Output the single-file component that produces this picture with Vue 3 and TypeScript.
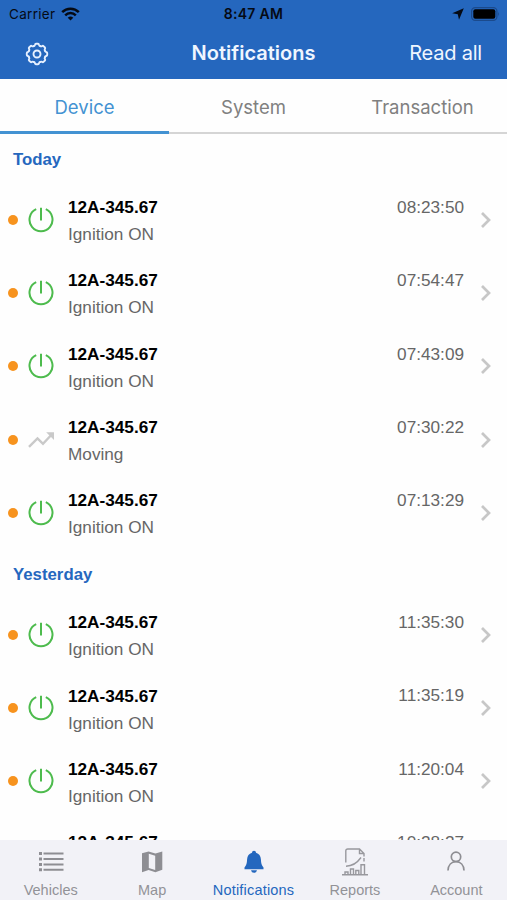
<script setup lang="ts">
type Kind = 'ignition' | 'moving'

interface Notice {
  plate: string
  label: string
  time: string
  kind: Kind
}

interface Section {
  title: string
  items: Notice[]
}

const ignition = (time: string): Notice => ({ plate: '12A-345.67', label: 'Ignition ON', time, kind: 'ignition' })
const moving = (time: string): Notice => ({ plate: '12A-345.67', label: 'Moving', time, kind: 'moving' })

const tabs = [
  { name: 'Device', active: true },
  { name: 'System', active: false },
  { name: 'Transaction', active: false },
]

const sections: Section[] = [
  {
    title: 'Today',
    items: [ignition('08:23:50'), ignition('07:54:47'), ignition('07:43:09'), moving('07:30:22'), ignition('07:13:29')],
  },
  {
    title: 'Yesterday',
    items: [ignition('11:35:30'), ignition('11:35:19'), ignition('11:20:04'), ignition('10:28:27')],
  },
]

const nav = ['Vehicles', 'Map', 'Notifications', 'Reports', 'Account']
const cogTurns = [0, 45, 90, 135, 180, 225, 270, 315]
</script>

<template>
  <div class="screen">
    <header class="top">
      <div class="status">
        <div class="carrier">
          <span>Carrier</span>
          <svg width="19" height="14" viewBox="0 0 19 14">
            <path d="M9.500 13.600L6.700 10.800A4 4 0 0 1 12.300 10.800Z" fill="#050a14" />
            <path d="M4.200 8.300A7.500 7.500 0 0 1 14.800 8.300M1.200 5.200A11.700 11.700 0 0 1 17.800 5.200" fill="none" stroke="#050a14" stroke-width="2.500" />
          </svg>
        </div>
        <span class="clock">8:47 AM</span>
        <div class="power">
          <svg width="12" height="12" viewBox="0 0 12 12"><path d="M11.800 .2L7 11.800L5.800 6.200L.2 5.300Z" fill="#050a14" /></svg>
          <svg width="29" height="14" viewBox="0 0 29 14">
            <rect x=".6" y=".6" width="25.300" height="12.800" rx="3.600" fill="none" stroke="#1b4a8c" stroke-width="1.200" />
            <rect x="2.300" y="2.300" width="22" height="9.400" rx="2" fill="#000" />
            <path d="M27.200 4.800Q29 7 27.200 9.200Z" fill="#1b4a8c" />
          </svg>
        </div>
      </div>
      <div class="bar">
        <svg class="gear" width="24" height="24" viewBox="-12 -12 24 24" fill="none" stroke="#e6f0ff" stroke-width="1.900" stroke-linejoin="round" stroke-linecap="round">
          <path
            v-for="turn in cogTurns"
            :key="turn"
            :transform="`rotate(${turn})`"
            d="M-3.300 -7.900Q-2.300 -8 -2 -9.200Q-1.800 -10.200 -1 -10.200H1Q1.800 -10.200 2 -9.200Q2.300 -8 3.300 -7.900"
          />
          <circle r="3.500" />
        </svg>
        <h1>Notifications</h1>
        <span class="read">Read all</span>
      </div>
    </header>

    <nav class="tabs">
      <div v-for="tab in tabs" :key="tab.name" class="tab" :class="{ active: tab.active }">
        <span>{{ tab.name }}</span>
      </div>
    </nav>

    <main class="list">
      <section v-for="section in sections" :key="section.title">
        <h2>{{ section.title }}</h2>
        <article v-for="item in section.items" :key="item.time" class="row">
          <i class="dot"></i>
          <svg v-if="item.kind === 'ignition'" class="kind" width="26" height="26" viewBox="0 0 26 26" fill="none" stroke="#4dbb4d" stroke-width="2">
            <path d="M8.200 2.200A11.500 11.500 0 1 0 17.800 2.200M13 .8V13.500" />
          </svg>
          <svg v-else class="kind" width="26" height="26" viewBox="0 0 26 26" fill="none" stroke="#c9c9c9" stroke-width="2.400">
            <path d="M1 19.800L9.500 11.400L15 16.800L23 8.200" />
            <path d="M18.200 5.300H26V13.100Z" fill="#c9c9c9" stroke="none" />
          </svg>
          <div class="text">
            <strong>{{ item.plate }}</strong>
            <span>{{ item.label }}</span>
          </div>
          <time>{{ item.time }}</time>
          <svg class="chevron" width="12" height="18" viewBox="0 0 12 18" fill="none" stroke="#c7c7c7" stroke-width="2.700">
            <path d="M2 2L9 9L2 16" />
          </svg>
        </article>
      </section>
    </main>

    <footer class="bottom">
      <div v-for="name in nav" :key="name" class="item" :class="{ current: name === 'Notifications' }">
        <svg v-if="name === 'Vehicles'" width="28" height="28" viewBox="0 0 28 28" fill="#8e8e93">
          <path d="M2 4h3v3H2zM2 9.600h3v3H2zM2 15h3v3H2zM2 20.300h3v3H2zM6.500 4.600h20v2h-20zM6.500 10h20v2h-20zM6.500 15.400h20v2h-20zM6.500 20.800h20v2h-20z" />
        </svg>
        <svg v-else-if="name === 'Map'" width="28" height="28" viewBox="0 0 28 28">
          <path fill="#8e8e93" fill-rule="evenodd" d="M4 5.300L10.600 3.400L17.400 5.500L24.300 3.400V21.800L17.400 24.300L10.600 22L4 24.300ZM10.800 5.800V20L17.200 22.100V7.800Z" />
        </svg>
        <svg v-else-if="name === 'Notifications'" width="28" height="28" viewBox="0 0 28 28" fill="#2467be">
          <path d="M14 2.700C15.200 2.700 16 3.500 16 4.700C19 5.500 20.700 8 20.900 11.300C21.100 15.400 21.500 17.400 23.500 19.400V21.200H4.500V19.400C6.500 17.400 6.900 15.400 7.100 11.300C7.300 8 9 5.500 12 4.700C12 3.500 12.800 2.700 14 2.700ZM11 22.200H17Q16.500 24.800 14 24.800T11 22.200Z" />
        </svg>
        <svg v-else-if="name === 'Reports'" width="28" height="28" viewBox="0 0 28 28" fill="none" stroke="#98989d" stroke-width="1.400">
          <path d="M4.800 14.500V3Q4.800 1 6.800 1H18.500L23 5.500V8.500M18.500 1V5.500H23M23 10V13.500M5 18.200Q14 18 20 9.500M1 26.800H27M4 26.500V24H7V26.500M9.500 26.500V21H12.500V26.500M14.800 26.500V22.500H17.800V26.500M20 26.500V16.800H23.500V26.500" />
        </svg>
        <svg v-else width="28" height="28" viewBox="0 0 28 28" fill="none" stroke="#8e8e93" stroke-width="1.700">
          <circle cx="14" cy="8.800" r="4.700" />
          <path d="M6 22.500C6.200 17 9.500 13.700 14 13.700S21.800 17 22 22.500" />
        </svg>
        <span>{{ name }}</span>
      </div>
    </footer>
  </div>
</template>

<style>
body {
  margin: 0;
  overflow: hidden;
}
</style>

<style scoped>
.screen {
  display: flex;
  flex-direction: column;
  width: 507px;
  height: 900px;
  overflow: hidden;
  background: #fefefe;
  font-family: "Liberation Sans", Arial, sans-serif;
}
.top {
  flex: none;
  height: 79px;
  background: #2567be;
  font-family: Inter, sans-serif;
}
.status {
  display: grid;
  grid-template-columns: 1fr auto 1fr;
  align-items: center;
  height: 27px;
  color: #050a14;
  font-size: 13px;
}
.carrier {
  display: flex;
  align-items: center;
  gap: 6px;
  padding-left: 9px;
  font-size: 13.500px;
  letter-spacing: 0.3px;
}
.clock {
  font-size: 14px;
  font-weight: 600;
  letter-spacing: 0.3px;
}
.power {
  display: flex;
  justify-content: flex-end;
  align-items: center;
  gap: 7px;
  padding-right: 7px;
}
.bar {
  display: grid;
  grid-template-columns: 1fr auto 1fr;
  align-items: center;
  height: 52px;
  color: #eff6ff;
}
.gear {
  margin: 2px 0 0 24.500px;
}
h1 {
  margin: 0;
  font-size: 20px;
  font-weight: 600;
}
.read {
  padding-right: 25px;
  text-align: right;
  font-size: 20px;
  letter-spacing: -0.200px;
}
.tabs {
  display: flex;
  flex: none;
  height: 55.300px;
  font-family: Inter, sans-serif;
  font-size: 18.500px;
}
.tab {
  flex: 1;
  box-sizing: border-box;
  padding-top: 17px;
  border-bottom: 2px solid #d5d5d5;
  color: #808080;
  line-height: 22px;
  text-align: center;
}
.tab.active {
  border-bottom: 3px solid #4392d2;
  color: #4392d2;
}
.list {
  flex: 1;
  min-height: 0;
  overflow: hidden;
}
h2 {
  margin: 0;
  padding-left: 13px;
  height: 48.700px;
  color: #2567be;
  font-size: 16.800px;
  font-weight: 700;
  line-height: 52px;
}
.row {
  display: flex;
  align-items: center;
  box-sizing: border-box;
  height: 73.300px;
  padding: 0 15px 0 8px;
}
.dot {
  flex: none;
  width: 10px;
  height: 10px;
  border-radius: 50%;
  background: #f7931e;
}
.kind {
  flex: none;
  margin: 0 14px 0 10px;
}
.text {
  display: flex;
  flex: 1;
  flex-direction: column;
  gap: 7px;
  padding-top: 2px;
  line-height: 20px;
}
.text strong {
  color: #000;
  font-size: 17.200px;
}
.text span {
  color: #666;
  font-size: 17.200px;
}
time {
  align-self: flex-start;
  padding-top: 14px;
  color: #666;
  font-size: 17.200px;
  line-height: 20px;
}
.chevron {
  flex: none;
  margin-left: 16px;
}
.bottom {
  display: flex;
  flex: none;
  height: 60px;
  background: #f2f2f7;
}
.item {
  display: flex;
  flex: 1;
  flex-direction: column;
  align-items: center;
  padding-top: 8px;
  color: #929297;
  font-size: 14.500px;
  line-height: 18px;
}
.item span {
  margin-top: 5px;
}
.item.current {
  color: #2467be;
  letter-spacing: 0.200px;
}
</style>
